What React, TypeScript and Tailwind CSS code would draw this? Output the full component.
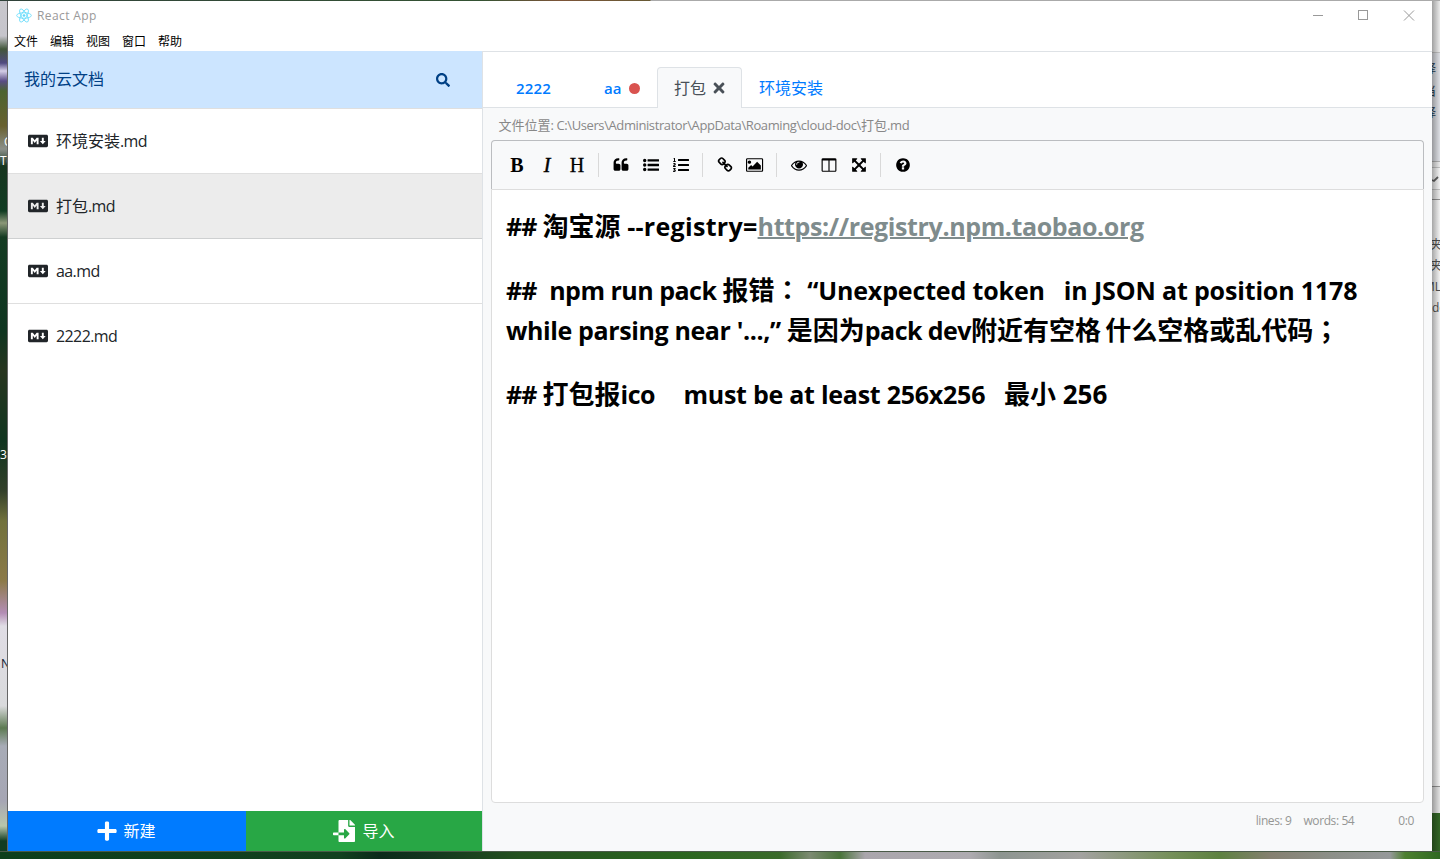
import React from "react";
import { FaSearch, FaMarkdown, FaPlus, FaFileImport, FaTimes, FaListOl } from "react-icons/fa";

const ui = "font-['Open_Sans','Noto_Sans_CJK_SC',sans-serif]";

const dot = "a192 192 0 1 1-384 0a192 192 0 1 1 384 0z";
const quoteHalf =
  "v384q0 80-56 136t-136 56h-384q-80 0-136-56t-56-136v-704q0-104 40.5-198.5t109.5-163.5 163.5-109.5 198.5-40.5h64q26 0 45 19t19 45v128q0 26-19 45t-45 19h-64q-106 0-181 75t-75 181v32q0 40 28 68t68 28h224q80 0 136 56t56 136z";

const glyphs = {
  quote: `M832 960${quoteHalf}M1728 960${quoteHalf}`,
  list: `M384 1408${dot}M384 896${dot}M384 384${dot}M544 1280h1216q32 0 32 32v192q0 32-32 32h-1216q-32 0-32-32v-192q0-32 32-32zM544 768h1216q32 0 32 32v192q0 32-32 32h-1216q-32 0-32-32v-192q0-32 32-32zM544 256h1216q32 0 32 32v192q0 32-32 32h-1216q-32 0-32-32v-192q0-32 32-32z`,
  link: "M1520 1216q0-40-28-68l-208-208q-28-28-68-28-42 0-72 32 3 3 19 18.5t21.5 21.5 15 19 13 25.5 3.5 27.5q0 40-28 68t-68 28q-15 0-27.5-3.5t-25.5-13-19-15-21.5-21.5-18.5-19q-33 31-33 73 0 40 28 68l206 207q27 27 68 27 40 0 68-26l147-146q28-28 28-67zm-703-705q0-40-28-68l-206-207q-28-28-68-28-39 0-68 27l-147 146q-28 28-28 67 0 40 28 68l208 208q27 27 68 27 42 0 72-31-3-3-19-18.5t-21.5-21.5-15-19-13-25.5-3.5-27.5q0-40 28-68t68-28q15 0 27.5 3.5t25.5 13 19 15 21.5 21.5 18.5 19q33-31 33-73zm895 705q0 120-85 203l-147 146q-83 83-203 83-121 0-204-85l-206-207q-83-83-83-203 0-123 88-209l-88-88q-86 88-208 88-120 0-204-84l-208-208q-84-84-84-204t85-203l147-146q83-83 203-83 121 0 204 85l206 207q83 83 83 203 0 123-88 209l88 88q86-88 208-88 120 0 204 84l208 208q84 84 84 204z",
  image: "M576 576q0 80-56 136t-136 56-136-56-56-136 56-136 136-56 136 56 56 136zm1088 384v448h-1408v-192l320-320 160 160 512-512zm96-704h-1600q-13 0-22.5 9.5t-9.5 22.5v1216q0 13 9.5 22.5t22.5 9.5h1600q13 0 22.5-9.5t9.5-22.5v-1216q0-13-9.5-22.5t-22.5-9.5zm160 32v1216q0 66-47 113t-113 47h-1600q-66 0-113-47t-47-113v-1216q0-66 47-113t113-47h1600q66 0 113 47t47 113z",
  eye: "M1664 960q-152-236-381-353 61 104 61 225 0 185-131.5 316.5t-316.5 131.5-316.5-131.5-131.5-316.5q0-121 61-225-229 117-381 353 133 205 333.5 326.5t434.5 121.5 434.5-121.5 333.5-326.5zm-720-384q0-20-14-34t-34-14q-125 0-214.5 89.5t-89.5 214.5q0 20 14 34t34 14 34-14 14-34q0-86 61-147t147-61q20 0 34-14t14-34zm848 384q0 34-20 69-140 230-376.5 368.5t-499.5 138.5-499.5-139-376.5-368q-20-35-20-69t20-69q140-229 376.5-368t499.5-139 499.5 139 376.5 368q20 35 20 69z",
  columns: "M224 1536h608v-1152h-640v1120q0 13 9.5 22.5t22.5 9.5zm1376-32v-1120h-640v1152h608q13 0 22.5-9.5t9.5-22.5zm128-1216v1216q0 66-47 113t-113 47h-1344q-66 0-113-47t-47-113v-1216q0-66 47-113t113-47h1344q66 0 113 47t47 113z",
  expand: "M1411 541l-355 355 355 355 144-144q29-31 70-14 39 17 39 59v448q0 26-19 45t-45 19h-448q-42 0-59-40-17-39 14-69l144-144-355-355-355 355 144 144q31 30 14 69-17 40-59 40h-448q-26 0-45-19t-19-45v-448q0-42 40-59 39-17 69 14l144 144 355-355-355-355-144 144q-19 19-45 19-12 0-24-5-40-17-40-59v-448q0-26 19-45t45-19h448q42 0 59 40 17 39-14 69l-144 144 355 355 355-355-144-144q-31-30-14-69 17-40 59-40h448q26 0 45 19t19 45v448q0 42-39 59-13 5-25 5-26 0-45-19z",
  help: "M1024 1376v-192q0-14-9-23t-23-9h-192q-14 0-23 9t-9 23v192q0 14 9 23t23 9h192q14 0 23-9t9-23zm256-672q0-88-55.5-163t-138.5-116-170-41q-243 0-371 213-15 24 8 42l132 100q7 6 19 6 16 0 25-12 53-68 86-92 34-24 86-24 48 0 85.5 26t37.5 59q0 38-20 61t-68 45q-63 28-115.5 86.5t-52.5 125.5v36q0 14 9 23t23 9h192q14 0 23-9t9-23q0-19 21.5-49.5t54.5-49.5q32-18 49-28.5t46-35 44.5-48 28-60.5 12.5-81zm384 192q0 209-103 385.5t-279.5 279.5-385.5 103-385.5-103-279.5-279.5-103-385.5 103-385.5 279.5-279.5 385.5-103 385.5 103 279.5 279.5 103 385.5z",
};

function Glyph({ name }: { name: keyof typeof glyphs }) {
  const wide = name === "image";
  return (
    <svg viewBox={wide ? "0 0 1920 1792" : "0 0 1792 1792"} className={wide ? "h-4 w-[17.14px]" : "size-4"} fill="currentColor">
      <path d={glyphs[name]} />
    </svg>
  );
}

function Tool({ children }: { children: React.ReactNode }) {
  return <button className="flex h-[30px] w-[30px] items-center justify-center text-black">{children}</button>;
}

function Divider() {
  return <i className="mr-[7px] ml-1.5 h-6 w-px bg-[#d9d9d9]" />;
}

function ReactLogo() {
  return (
    <svg viewBox="0 0 24 22" className="h-[15px] w-4" fill="none" stroke="#61dafb" strokeWidth="1.2">
      <ellipse cx="12" cy="11" rx="11" ry="4.2" />
      <ellipse cx="12" cy="11" rx="11" ry="4.2" transform="rotate(60 12 11)" />
      <ellipse cx="12" cy="11" rx="11" ry="4.2" transform="rotate(120 12 11)" />
      <circle cx="12" cy="11" r="2" fill="#61dafb" stroke="none" />
    </svg>
  );
}

function TitleBar() {
  return (
    <header className="flex h-[29px] items-center pl-2 text-xs text-[#999]">
      <ReactLogo />
      <span className="ml-[5px] flex-1 tracking-[0.4px]">React App</span>
      <svg className="h-[11px] w-[120px]" fill="none" stroke="#999" shapeRendering="crispEdges">
        <path d="M1 5.5h10M46.5.5h9v9h-9z" />
        <path d="M92 .5l10 10M102 .5l-10 10" shapeRendering="auto" />
      </svg>
    </header>
  );
}

const files = [
  { name: "环境安装", ext: ".md" },
  { name: "打包", ext: ".md" },
  { name: "", ext: "aa.md" },
  { name: "", ext: "2222.md" },
];
const menus = ["文件", "编辑", "视图", "窗口", "帮助"];

function Sidebar() {
  return (
    <aside className="flex w-[474px] flex-col text-base text-[#212529]">
      <div className="flex h-[57px] items-center justify-between bg-[#cce5ff] pr-8 pl-4 text-[#004085]">
        <span className="pb-0.5">我的云文档</span>
        <FaSearch className="size-[14px]" />
      </div>
      <ul className="flex-1 border-t border-[#dfdfdf]">
        {files.map((f, i) => (
          <li
            key={f.name + f.ext}
            className={
              i === 1
                ? "flex h-[65px] items-center border-b border-[#ced0d1] bg-[#ececec] pl-5"
                : i === 3
                  ? "flex h-16 items-center pl-5"
                  : "flex h-[65px] items-center border-b border-[#dfdfdf] pl-5"
            }
          >
            <FaMarkdown className="size-5" />
            <span className="ml-2">
              {f.name}
              <span className="tracking-[-0.6px]">{f.ext}</span>
            </span>
          </li>
        ))}
      </ul>
      <div className="flex h-10 text-white">
        <button className="flex flex-1 items-center justify-center bg-[#007bff] pr-0.5">
          <FaPlus className="mr-[5px] size-[22px]" />
          新建
        </button>
        <button className="flex flex-1 items-center justify-center bg-[#28a745]">
          <FaFileImport className="mr-[7px] size-[22px]" />
          导入
        </button>
      </div>
    </aside>
  );
}

function Tabs() {
  return (
    <nav className="flex h-14 items-end border-b border-[#dee2e6] text-base text-[#007bff]">
      <span className="ml-[33px] flex h-[41px] w-[88px] items-center pt-[3px] text-[15px] font-semibold tracking-[0.2px]">2222</span>
      <span className="flex h-[41px] w-[53px] items-center pt-[3px] text-[15px] font-semibold">
        aa
        <i className="ml-2 size-[11px] rounded-full bg-[#d9534f]" />
      </span>
      <span className="-mb-px flex h-[41px] w-[85px] items-center rounded-t border border-b-0 border-[#dee2e6] bg-[#f8f9fa] pl-4 text-[#495057]">
        打包
        <FaTimes className="ml-[5px] size-4" />
      </span>
      <span className="ml-[17px] flex h-[41px] items-center pt-0.5">环境安装</span>
    </nav>
  );
}

function Toolbar() {
  return (
    <div className="flex h-[49px] items-center rounded-t border border-b-0 border-[#bbbdc0] pl-[10px]">
      <Tool><span className="font-['Liberation_Serif',serif] text-xl font-bold">B</span></Tool>
      <Tool><span className="font-['Liberation_Serif',serif] text-xl italic [-webkit-text-stroke:0.5px_black]">I</span></Tool>
      <Tool><span className="font-['Liberation_Serif',serif] text-xl [-webkit-text-stroke:0.3px_black]">H</span></Tool>
      <Divider />
      <Tool><Glyph name="quote" /></Tool>
      <Tool><Glyph name="list" /></Tool>
      <Tool><FaListOl className="size-4" /></Tool>
      <Divider />
      <Tool><Glyph name="link" /></Tool>
      <Tool><Glyph name="image" /></Tool>
      <Divider />
      <Tool><Glyph name="eye" /></Tool>
      <Tool><Glyph name="columns" /></Tool>
      <Tool><Glyph name="expand" /></Tool>
      <Divider />
      <Tool><Glyph name="help" /></Tool>
    </div>
  );
}

function Wide({ children }: { children: string }) {
  return <span lang="zh-TW" className="font-['Noto_Sans_CJK_TC',sans-serif] leading-none">{children}</span>;
}

function Document() {
  return (
    <div className="h-[614px] rounded-b border border-[#ddd] bg-white px-[14px] pt-4 text-[26px] leading-10 font-bold whitespace-pre text-black">
      <p className="h-10">
        <span className="text-[25px] tracking-[-0.8px]">{"## "}</span>
        <span>{"淘宝源 "}</span>
        <span className="text-[25px] tracking-[0.3px]">--registry=</span>
        <a className="text-[25px] tracking-[-0.38px] text-[#7f8c8d] underline decoration-2">https://registry.npm.taobao.org</a>
      </p>
      <p className="mt-6 h-10">
        <span className="text-[25px] tracking-[-0.8px]">{"## "}</span>
        <span>{" "}</span>
        <span className="text-[25px] tracking-[-0.5px]">{"npm run pack "}</span>
        <span>报错</span>
        <Wide>：</Wide>
        <span>{" "}</span>
        <span className="text-[25px] tracking-[-0.15px]">{"“Unexpected token   in JSON at position 1178"}</span>
      </p>
      <p className="h-10">
        <span className="text-[25px] tracking-[-0.38px]">{"while parsing near '...,” "}</span>
        <span>是因为</span>
        <span className="text-[25px] tracking-[-0.55px]">pack dev</span>
        <span className="[word-spacing:-2.5px]">附近有空格 什么空格或乱代码</span>
        <Wide>；</Wide>
      </p>
      <p className="mt-6 h-10">
        <span className="text-[25px] tracking-[-0.8px]">{"## "}</span>
        <span>打包报</span>
        <span className="text-[25px] tracking-[-0.4px]">ico</span>
        <span className="tracking-[0.3px]">{"    "}</span>
        <span className="text-[25px] tracking-[-0.25px]">{"must be at least 256x256   "}</span>
        <span>最小 256</span>
      </p>
    </div>
  );
}

function Editor() {
  return (
    <main className="flex min-w-0 flex-1 flex-col border-t border-l border-[#dee2e6] bg-white">
      <Tabs />
      <div className="flex flex-1 flex-col bg-[#f8f9fa] px-2">
        <p className="flex h-8 items-center pt-1 pl-[7.5px] text-[13px] tracking-[-0.4px] text-[#888]">
          <span><span className="tracking-normal">文件位置</span>: C:\Users\Administrator\AppData\Roaming\cloud-doc\<span className="tracking-normal">打包</span>.md</span>
        </p>
        <Toolbar />
        <Document />
        <footer className="flex h-9 items-center justify-end pr-[10px] text-xs tracking-[-0.4px] text-[#959694]">
          <span>lines: 9</span>
          <span className="ml-3">words: 54</span>
          <span className="ml-11">0:0</span>
        </footer>
      </div>
    </main>
  );
}

function DesktopEdge() {
  return (
    <div className="relative w-2 overflow-hidden border-r border-[#666] bg-[linear-gradient(180deg,#c9c8cd_0px,#c5c4cb_35px,#42563a_48px,#504a80_62px,#d5cfe8_70px,#5a4c86_80px,#4b6330_90px,#68602f_125px,#8c908a_148px,#17351f_165px,#113c22_210px,#8b9778_222px,#143b22_236px,#0f3520_330px,#27351f_370px,#10351f_440px,#33402a_490px,#71713c_520px,#8c7a48_580px,#b38db5_612px,#e0dde5_625px,#d9dadc_705px,#5c7a51_727px,#a7abb6_745px,#a6a6b4_800px,#b8c6ab_825px,#123d22_840px)] text-xs leading-none text-white">
      <span className="absolute top-[135px] left-1">C</span>
      <span className="absolute top-[154px] left-0">Te</span>
      <span className="absolute top-[448px] left-0">36</span>
      <span className="absolute top-[657px] left-px text-[#111c30]">N</span>
    </div>
  );
}

function WindowBehind() {
  return (
    <div className="relative w-2 overflow-hidden bg-[#f7f7f7] text-xs leading-none text-[#555]">
      <div className="h-[52px] border-b border-[#ccc]" />
      <div className="h-[109px] border-b border-[#bbb] bg-[#e9ebf0]" />
      <div className="mt-[5px] h-[23px] border-y border-[#ccc] bg-white" />
      <div className="mt-[9px] h-[588px] border-t border-b border-[#999] bg-white" />
      <div className="h-[26px] bg-[#eee]" />
      <div className="h-[40px] bg-[#356b27]" />
      <span className="absolute top-[62px] -left-2 text-[#2b4257]">择</span>
      <span className="absolute top-[85px] -left-2 text-[#2b4257]">当</span>
      <span className="absolute top-[106px] -left-2 text-[#2b4257]">择</span>
      <svg className="absolute top-[175px] left-0 size-[7px]" fill="none" stroke="#666" strokeWidth="1.8">
        <path d="M0 4l2 1 4-4" />
      </svg>
      <span className="absolute top-[238px] -left-0.5">夹</span>
      <span className="absolute top-[259px] -left-0.5">夹</span>
      <span className="absolute top-[280px] -left-2">ML</span>
      <span className="absolute top-[301px] left-0">do</span>
      <div className="absolute inset-0 bg-gradient-to-r from-black/35 to-black/5" />
    </div>
  );
}

export default function App() {
  return (
    <div className={`${ui} flex h-[859px] w-[1440px] flex-col overflow-hidden bg-[#123d20]`}>
      <div className="h-px w-full bg-[linear-gradient(90deg,#30423a_0px,#345233_480px,#7d5538_560px,#665934_650px,#aaa_651px)]" />
      <div className="flex h-[850px]">
        <DesktopEdge />
        <div className="flex w-[1424px] flex-col bg-white">
          <TitleBar />
          <nav className="flex h-[21px] items-center gap-3 pt-0.5 pl-1.5 text-xs text-black">
            {menus.map((m) => <span key={m}>{m}</span>)}
          </nav>
          <div className="flex min-h-0 flex-1">
            <Sidebar />
            <Editor />
          </div>
        </div>
        <WindowBehind />
      </div>
      <div className="flex-1 border-t border-[#4a5a48] bg-[linear-gradient(90deg,#0d3f1b_0px,#12401f_340px,#0b2a1a_380px,#14361f_430px,#24511f_520px,#2b661f_680px,#3b6b2b_780px,#7d8b72_810px,#49743a_840px,#aaa6ac_865px,#aeabb0_970px,#8d9590_1000px,#a3a2a0_1080px,#76905b_1170px,#5d8140_1220px,#858070_1270px,#8c8f88_1330px,#96999a_1390px,#4d8030_1405px,#2f6922_1440px)]" />
    </div>
  );
}
